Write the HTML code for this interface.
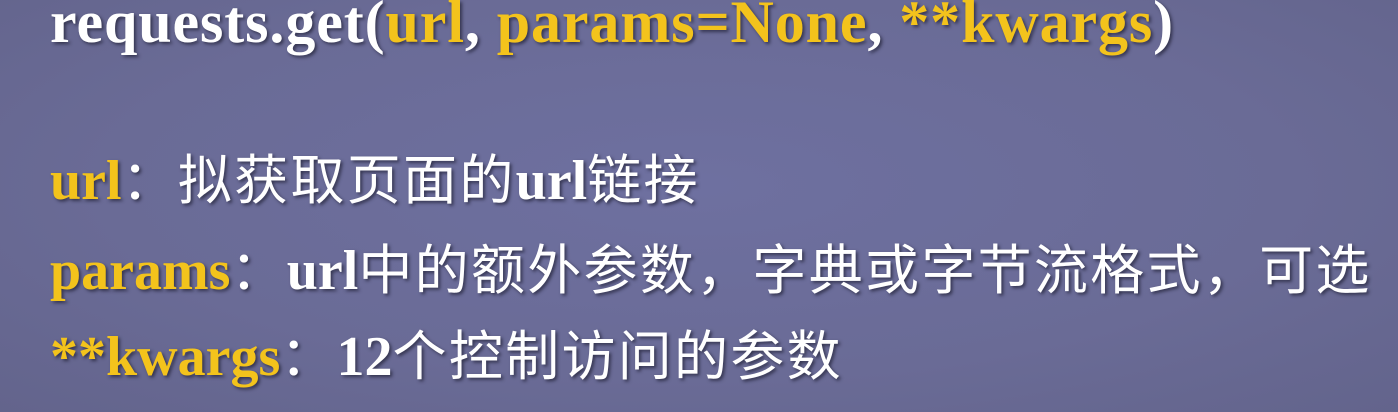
<!DOCTYPE html>
<html><head><meta charset="utf-8"><style>
html,body{margin:0;padding:0}
body{width:1398px;height:412px;overflow:hidden;background:radial-gradient(ellipse at 50% 45%,#6e70a0 0%,#6a6b96 60%,#63648c 100%);position:relative;font-family:"Liberation Serif","Noto Sans CJK SC",serif}
.l{position:absolute;left:50px;white-space:nowrap;color:#fff;text-shadow:2px 2px 3px rgba(30,30,50,.7)}
.t{top:-12px;font-size:60px;font-weight:bold;letter-spacing:0.9px}
.y{color:#f3c31c}
.b{font-weight:bold;font-size:56px}
.c{font-family:"Noto Sans CJK SC",sans-serif;font-weight:normal;letter-spacing:2.3px;font-size:54px}
.s{font-size:54px}
</style></head><body>
<div class="l t">requests.get(<span class="y">url</span>, <span class="y">params=None</span>, <span class="y">**kwargs</span>)</div>
<div class="l s" style="top:136px"><span class="y b">url</span><span class="c">：拟获取页面的</span><span class="b">url</span><span class="c">链接</span></div>
<div class="l s" style="top:226px"><span class="y b">params</span><span class="c">：</span><span class="b">url</span><span class="c">中的额外参数，字典或字节流格式，可选</span></div>
<div class="l s" style="top:312px"><span class="y b">**kwargs</span><span class="c">：</span><span class="b">12</span><span class="c">个控制访问的参数</span></div>
</body></html>
